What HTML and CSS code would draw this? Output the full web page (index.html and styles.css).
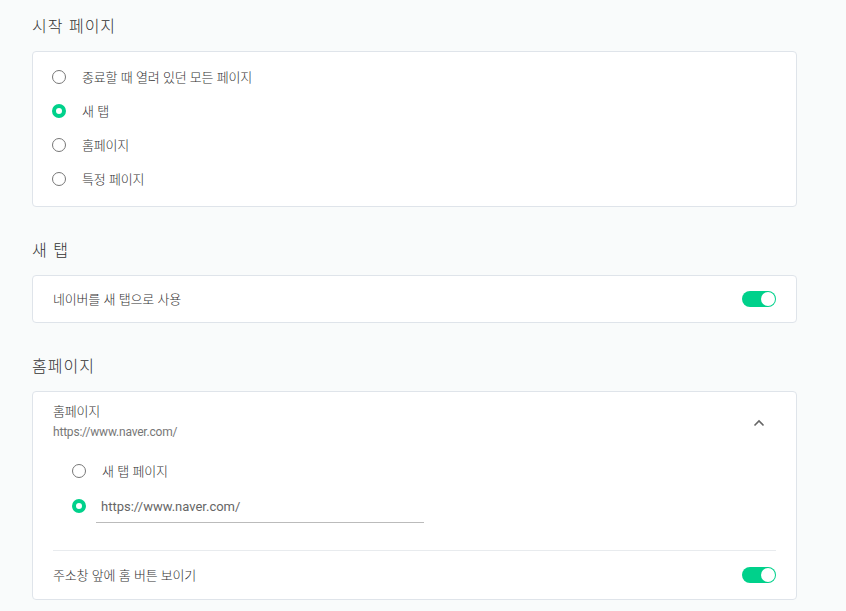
FILE: index.html
```html
<!DOCTYPE html>
<html lang="ko">
<head>
<meta charset="utf-8">
<link rel="stylesheet" href="styles.css">
</head>
<body>
<div class="page">
  <section class="section">
    <h2 class="heading">시작 페이지</h2>
    <div class="card radio-card">
      <label class="radio-row"><span class="radio"></span><span class="label">종료할 때 열려 있던 모든 페이지</span></label>
      <label class="radio-row"><span class="radio checked"></span><span class="label">새 탭</span></label>
      <label class="radio-row"><span class="radio"></span><span class="label">홈페이지</span></label>
      <label class="radio-row"><span class="radio"></span><span class="label">특정 페이지</span></label>
    </div>
  </section>

  <section class="section">
    <h2 class="heading">새 탭</h2>
    <div class="card toggle-card">
      <span class="label">네이버를 새 탭으로 사용</span>
      <span class="toggle"><span class="knob"></span></span>
    </div>
  </section>

  <section class="section">
    <h2 class="heading">홈페이지</h2>
    <div class="card home-card">
      <div class="home-head">
        <div class="home-info">
          <div class="label">홈페이지</div>
          <div class="url">https://www.naver.com/</div>
        </div>
        <svg class="chevron" width="12" height="8" viewBox="0 0 12 8"><path d="M1.5 6.5 L6 2 L10.5 6.5" fill="none" stroke="#666" stroke-width="1.6"/></svg>
      </div>
      <div class="sub-list">
        <label class="sub-row"><span class="radio"></span><span class="label sub-label">새 탭 페이지</span></label>
        <label class="sub-row"><span class="radio checked"></span><span class="input">https://www.naver.com/</span></label>
      </div>
      <div class="divider"></div>
      <div class="home-foot">
        <span class="label">주소창 앞에 홈 버튼 보이기</span>
        <span class="toggle"><span class="knob"></span></span>
      </div>
    </div>
  </section>
</div>
</body>
</html>
```

FILE: styles.css
```css
* { box-sizing: border-box; }
html, body {
  margin: 0;
  padding: 0;
  background: #f9fbfb;
}
body {
  font-family: "Noto Sans CJK KR", Roboto, sans-serif;
  color: #333;
}
.page {
  padding-left: 32px;
  width: 797px;
  display: flex;
  flex-direction: column;
  gap: 17px;
}
.section { display: flex; flex-direction: column; }
.heading {
  margin: 0;
  height: 51px;
  padding-top: 13px;
  font-size: 16px;
  line-height: 24px;
  font-weight: 300;
  color: #333;
  letter-spacing: 1px;
}
.card {
  background: #fff;
  border: 1px solid #dfe4ea;
  border-radius: 4px;
}
.label {
  font-size: 13px;
  line-height: 18px;
  font-weight: 300;
  letter-spacing: -0.2px;
  color: #333;
}
.radio-card {
  padding: 8px 19px 10px;
  height: 156px;
}
.radio-row {
  height: 34px;
  display: flex;
  align-items: center;
  gap: 16px;
}
.radio {
  width: 14px;
  height: 14px;
  border-radius: 50%;
  border: 1px solid #777;
  flex: none;
  background: #fff;
}
.radio.checked {
  border: 4px solid #00d18b;
}
.toggle-card {
  height: 48px;
  display: flex;
  align-items: center;
  justify-content: space-between;
  padding: 0 20px;
}
.toggle {
  width: 34px;
  height: 16px;
  border-radius: 8px;
  background: #00d18b;
  display: flex;
  justify-content: flex-end;
  align-items: center;
  padding-right: 1px;
  flex: none;
}
.knob {
  width: 14px;
  height: 14px;
  border-radius: 50%;
  background: #fff;
}
.home-card {
  height: 209px;
  padding: 9px 20px 0;
  display: flex;
  flex-direction: column;
}
.home-head {
  display: flex;
  justify-content: space-between;
  align-items: center;
}
.home-info .label { line-height: 20px; display: block; }
.url {
  font-family: Roboto, sans-serif;
  font-size: 12px;
  line-height: 22px;
  color: #777;
  letter-spacing: -0.2px;
}
.chevron { margin-right: 11px; margin-top: 2px; }
.sub-list {
  padding: 10px 0 0 19px;
  display: flex;
  flex-direction: column;
}
.sub-row {
  height: 35px;
  display: flex;
  align-items: center;
  gap: 10px;
}
.sub-label { margin-left: 6px; }
.input {
  width: 328px;
  height: 30px;
  border-bottom: 1px solid #bbb;
  font-family: Roboto, sans-serif;
  font-size: 13px;
  line-height: 28px;
  color: #666;
  padding-left: 5px;
  margin-top: 4px;
}
.divider {
  height: 1px;
  background: #e8ebee;
  margin-top: 27px;
}
.home-foot {
  height: 47px;
  display: flex;
  align-items: center;
  justify-content: space-between;
}
```
